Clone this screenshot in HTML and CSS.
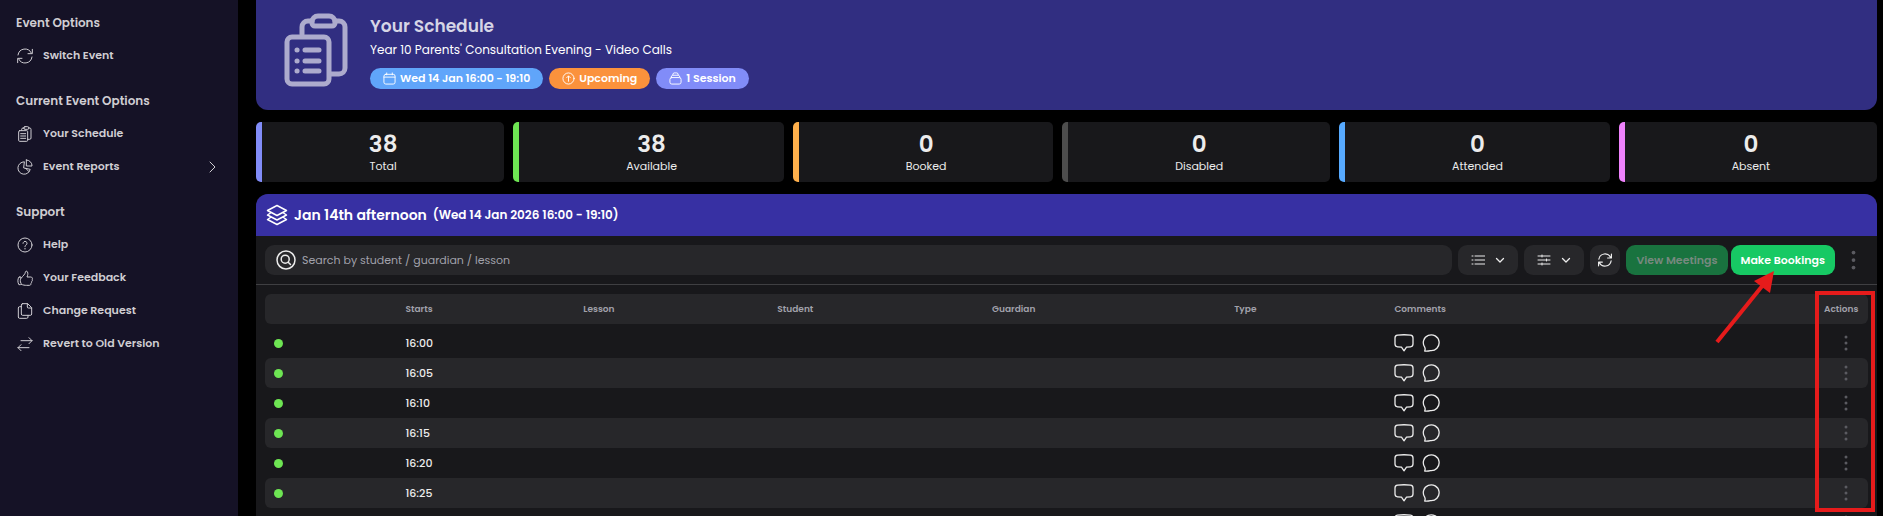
FILE: index.html
```html
<!DOCTYPE html>
<html lang="en">
<head>
<meta charset="UTF-8" />
<meta name="viewport" content="width=device-width, initial-scale=1" />
<title>Your Schedule</title>
<link rel="stylesheet" href="styles.css">
</head>
<body>
  <!-- Shared icons -->
  <svg class="sprite" aria-hidden="true">
    <symbol id="i-refresh" viewBox="0 0 24 24">
      <path d="M1.500 10.500A10.600 10.600 0 0 1 21.500 7.500M22.500 13.500A10.600 10.600 0 0 1 2.500 16.500M23 2v6.500h-6.500M1 22v-6.500h6.500" />
    </symbol>
    <symbol id="i-clipboard" viewBox="0 0 24 24">
      <path d="M7 6.500V5a2 2 0 0 1 2-2h2M17 3h2a2 2 0 0 1 2 2v13a2 2 0 0 1-2 2h-3M12 1h4a1.800 1.800 0 0 1 0 4h-4a1.800 1.800 0 0 1 0-4zM4 7h10.500a1.500 1.500 0 0 1 1.500 1.500v13a1.500 1.500 0 0 1-1.500 1.500H4a1.500 1.500 0 0 1-1.500-1.500v-13A1.500 1.500 0 0 1 4 7zM5.500 11.500h7.500M5.500 15h7.500M5.500 18.500h7.500" />
    </symbol>
    <symbol id="i-pie" viewBox="0 0 24 24">
      <path d="M10.500 4.200A9.300 9.300 0 1 0 19.800 15.500L10.500 13.500zM14 1.500v9h8.500a8.500 8.500 0 0 0-8.500-9zM13 14l5 5" />
    </symbol>
    <symbol id="i-help" viewBox="0 0 24 24">
      <circle cx="12" cy="12" r="10.500" />
      <path d="M9 9.500a3 3 0 1 1 4.500 2.600c-1 .6-1.500 1.200-1.500 2.400M12 17v1" />
    </symbol>
    <symbol id="i-thumb" viewBox="0 0 24 24">
      <path d="M6.500 21.500c3 1.200 5 1.500 8 1.500h4c1.500 0 2.500-1 2.500-2.200 0-.6-.2-1-.2-1 1-.5 1.500-1.400 1.300-2.600 1-.9 1.200-1.800.8-3 .8-1.700-.2-3.700-2.200-3.700H15c1-2.500 1.800-5 .8-7.500-.8-2-3-1.500-3.200.2C12.200 6.500 9 8.500 6.500 12M4.500 10.500H3C.8 14 .8 18 2.800 22H5c1-.3 1.500-1 1-2-1.500-3-1.200-5.500 0-8 .3-.9-.5-1.500-1.500-1.500z" />
    </symbol>
    <symbol id="i-docs" viewBox="0 0 24 24">
      <path d="M8.500 1h7.500l6 6v9.500a2 2 0 0 1-2 2H8.500a2 2 0 0 1-2-2V3a2 2 0 0 1 2-2zM15.500 1v5a1.500 1.500 0 0 0 1.500 1.500h5M6.500 5.500H4a2 2 0 0 0-2 2V21a2 2 0 0 0 2 2h10.500a2 2 0 0 0 2-2v-2.500" />
    </symbol>
    <symbol id="i-swap" viewBox="0 0 24 24">
      <path d="M6 7h16.500M18 2.500L22.500 7 18 11.500M18 17.500H1.500M6 13l-4.500 4.500L6 22" />
    </symbol>
    <symbol id="i-down" viewBox="0 0 12 12">
      <path d="M2.500 4.500L6 8l3.500-3.500" />
    </symbol>
    <symbol id="i-note" viewBox="0 0 20 18">
      <path d="M3.500 1.200Q10 .3 16.500 1.200Q19 1.500 19 4v6q0 2.500-2.500 2.800L12.500 13.200 10 16.800 7.500 13.200 3.500 12.800Q1 12.500 1 10V4q0-2.500 2.500-2.800z" />
    </symbol>
    <symbol id="i-chat" viewBox="0 0 18 18">
      <path d="M2.700 17q.9-2 0-3.800A7.900 7.900 0 1 1 8.500 16.600Q5.500 17.300 2.700 17z" />
    </symbol>
    <symbol id="i-more" viewBox="0 0 4 16">
      <circle cx="2" cy="2" r="1.500" /><circle cx="2" cy="8" r="1.500" /><circle cx="2" cy="14" r="1.500" />
    </symbol>
  </svg>

  <div class="app">
    <nav class="sidebar" aria-label="Main menu">
      <section class="menu-group">
        <h2>Event Options</h2>
        <a href="#switch"><svg class="icon"><use href="#i-refresh" /></svg>Switch Event</a>
      </section>
      <section class="menu-group">
        <h2>Current Event Options</h2>
        <a href="#schedule"><svg class="icon"><use href="#i-clipboard" /></svg>Your Schedule</a>
        <a href="#reports"><svg class="icon"><use href="#i-pie" /></svg>Event Reports
          <svg class="icon chevron" viewBox="0 0 12 12"><path d="M4 1l5 5-5 5" /></svg>
        </a>
      </section>
      <section class="menu-group">
        <h2>Support</h2>
        <a href="#help"><svg class="icon"><use href="#i-help" /></svg>Help</a>
        <a href="#feedback"><svg class="icon"><use href="#i-thumb" /></svg>Your Feedback</a>
        <a href="#change"><svg class="icon"><use href="#i-docs" /></svg>Change Request</a>
        <a href="#revert"><svg class="icon"><use href="#i-swap" /></svg>Revert to Old Version</a>
      </section>
    </nav>

    <main class="content">
      <header class="hero">
        <svg class="hero-icon" viewBox="0 0 64 74">
          <path d="M18 21V14a6 6 0 0 1 6-6h4M51 8h4a6 6 0 0 1 6 6v41a6 6 0 0 1-6 6h-8" />
          <path d="M34 3h11a6 6 0 0 1 6 6v1a3 3 0 0 1-3 3H31a3 3 0 0 1-3-3V9a6 6 0 0 1 6-6z" />
          <rect x="3" y="24" width="42" height="47" rx="5" />
          <path d="M21 37h14M21 48h14M21 58h14M13 37h.1M13 48h.1M13 58h.1" />
        </svg>
        <div class="hero-text">
          <h1>Your Schedule</h1>
          <p>Year 10 Parents' Consultation Evening - Video Calls</p>
          <div class="badges">
            <span class="badge blue">
              <svg class="icon" viewBox="0 0 14 14"><path d="M3 2.500h8a2 2 0 0 1 2 2v6.500a2 2 0 0 1-2 2H3a2 2 0 0 1-2-2V4.500a2 2 0 0 1 2-2zM1 5.500h12M4 1v2M10 1v2" /></svg>
              Wed 14 Jan 16:00 - 19:10
            </span>
            <span class="badge orange">
              <svg class="icon" viewBox="0 0 14 14"><circle cx="7" cy="7" r="6" /><path d="M7 10V4.500M5 6.200l2-2 2 2" /></svg>
              Upcoming
            </span>
            <span class="badge indigo">
              <svg class="icon" viewBox="0 0 14 14"><path d="M3 6h8a2 2 0 0 1 2 2v3a2 2 0 0 1-2 2H3a2 2 0 0 1-2-2V8a2 2 0 0 1 2-2zM2.200 5.800Q2.500 3.500 4 3.500h6q1.500 0 1.800 2.300M4 3.200Q4 1 5.500 1h3Q10 1 10 3.200" /></svg>
              1 Session
            </span>
          </div>
        </div>
      </header>

      <section class="stats" aria-label="Totals">
        <div class="stat total"><strong>38</strong><span>Total</span></div>
        <div class="stat available"><strong>38</strong><span>Available</span></div>
        <div class="stat booked"><strong>0</strong><span>Booked</span></div>
        <div class="stat disabled"><strong>0</strong><span>Disabled</span></div>
        <div class="stat attended"><strong>0</strong><span>Attended</span></div>
        <div class="stat absent"><strong>0</strong><span>Absent</span></div>
      </section>

      <section class="panel">
        <header class="panel-head">
          <svg class="icon layers" viewBox="0 0 22 22"><path d="M11 1.500l9.500 5L11 11.500l-9.500-5zM4.500 9L1.500 11l9.500 5 9.500-5-3-2M4.500 13.500l-3 2L11 20.500l9.500-5-3-2" /></svg>
          <h2>Jan 14th afternoon</h2>
          <span class="when">(Wed 14 Jan 2026 16:00 - 19:10)</span>
        </header>

        <div class="toolbar">
          <label class="search">
            <svg class="icon" viewBox="0 0 20 20"><circle cx="10" cy="10" r="9" /><circle cx="9.200" cy="9.200" r="4" /><path d="M12.200 12.200l2.300 2.300" /></svg>
            <input type="search" aria-label="Search" placeholder="Search by student / guardian / lesson" />
          </label>
          <button type="button" class="tool" aria-label="List view">
            <svg class="icon" viewBox="0 0 14 14"><path d="M4 3h10M4 7h10M4 11h10M1 3h1M1 7h1M1 11h1" /></svg>
            <svg class="icon caret"><use href="#i-down" /></svg>
          </button>
          <button type="button" class="tool" aria-label="Filters">
            <svg class="icon" viewBox="0 0 14 14"><path d="M1 3h12M1 7h12M1 11h12M5 2v2M9.500 6v2M5 10v2" /></svg>
            <svg class="icon caret"><use href="#i-down" /></svg>
          </button>
          <button type="button" class="tool square" aria-label="Refresh"><svg class="icon"><use href="#i-refresh" /></svg></button>
          <div class="actions">
            <button type="button" class="btn" disabled>View Meetings</button>
            <button type="button" class="btn">Make Bookings</button>
          </div>
          <button type="button" class="more large" aria-label="More options"><svg><use href="#i-more" /></svg></button>
        </div>

        <div class="table-wrap">
          <table>
            <thead>
              <tr>
                <th class="col-state"></th>
                <th class="col-starts">Starts</th>
                <th class="col-lesson">Lesson</th>
                <th class="col-student">Student</th>
                <th class="col-guardian">Guardian</th>
                <th class="col-type">Type</th>
                <th class="col-comments">Comments</th>
                <th class="col-actions">Actions</th>
              </tr>
            </thead>
            <tbody id="slots"></tbody>
          </table>
        </div>

        <div class="mark-box"></div>
        <svg class="mark-arrow" viewBox="0 0 62 76"><path class="shaft" d="M2 73L48 16" /><path class="tip" d="M59 2L39 12 55 24z" /></svg>
      </section>
    </main>
  </div>

<script>
  const times = ['16:00', '16:05', '16:10', '16:15', '16:20', '16:25', '16:30'];

  document.getElementById('slots').innerHTML = times.map(time => `
    <tr>
      <td><span class="dot"></span></td>
      <td>${time}</td>
      <td></td>
      <td></td>
      <td></td>
      <td></td>
      <td>
        <div class="comments">
          <button type="button" aria-label="Note for ${time}"><svg class="icon note"><use href="#i-note" /></svg></button>
          <button type="button" aria-label="Comment for ${time}"><svg class="icon chat"><use href="#i-chat" /></svg></button>
        </div>
      </td>
      <td><button type="button" class="more" aria-label="Actions for ${time}"><svg><use href="#i-more" /></svg></button></td>
    </tr>`).join('');
</script>
</body>
</html>
```
FILE: styles.css
```css
* {
  box-sizing: border-box;
}
body {
  margin: 0;
  font-family: Poppins, Inter, sans-serif;
  font-size: 11px;
  background: #000;
  color: #ececec;
}
h1, h2, p {
  margin: 0;
}
button {
  font-family: inherit;
  padding: 0;
  border: none;
  background: none;
  color: inherit;
  cursor: pointer;
}
.sprite {
  display: none;
}
.icon {
  display: block;
  flex: none;
  width: 16px;
  height: 16px;
  fill: none;
  stroke: currentColor;
  stroke-width: 1.5;
  stroke-linecap: round;
  stroke-linejoin: round;
}
.app {
  display: flex;
  height: 100vh;
  overflow: hidden;
}

/* Sidebar */
.sidebar {
  flex: none;
  width: 238px;
  padding: 7px 16px;
  background: #151226;
  color: #cfcdd2;
}
.menu-group {
  margin-bottom: 13px;
}
.menu-group h2 {
  font-size: 12px;
  font-weight: 600;
  line-height: 32px;
}
.menu-group a {
  display: flex;
  align-items: center;
  gap: 10px;
  height: 33px;
  padding-left: 1px;
  color: inherit;
  font-weight: 600;
  text-decoration: none;
}
.menu-group .chevron {
  width: 12px;
  height: 12px;
  margin-left: auto;
  margin-right: 4px;
  stroke-width: 1;
}

/* Main column */
.content {
  flex: 1;
  min-width: 0;
  padding: 0 6px 0 18px;
}
.hero {
  display: flex;
  align-items: flex-start;
  gap: 22px;
  padding: 13px 28px 21px;
  border-radius: 0 0 12px 12px;
  background: #312e81;
}
.hero-icon {
  width: 64px;
  height: 74px;
  fill: none;
  stroke: #adabcd;
  stroke-width: 5;
  stroke-linecap: round;
  stroke-linejoin: round;
}
.hero h1 {
  font-size: 17px;
  font-weight: 600;
  line-height: 26px;
  color: #d6d5e6;
}
.hero p {
  font-size: 12px;
  line-height: 22px;
  color: #fff;
}
.badges {
  display: flex;
  gap: 6px;
  margin-top: 7px;
}
.badge {
  display: flex;
  align-items: center;
  gap: 4px;
  height: 21px;
  padding: 0 13px;
  border-radius: 11px;
  color: #fff;
  font-weight: 600;
}
.badge .icon {
  width: 13px;
  height: 13px;
  stroke-width: 1;
}
.badge.blue {
  background: #60a5fa;
}
.badge.orange {
  background: #fb923c;
}
.badge.indigo {
  background: #818cf8;
}

/* Totals */
.stats {
  display: flex;
  gap: 9px;
  margin: 12px 0;
}
.stat {
  flex: 1 1 auto;
  display: flex;
  flex-direction: column;
  align-items: center;
  height: 60px;
  padding-top: 8px;
  border-left: 6px solid;
  border-radius: 5px;
  background: #18181b;
}
.stat strong {
  font-size: 23px;
  font-weight: 600;
  line-height: 28px;
  color: #ececec;
}
.stat span {
  line-height: 16px;
  color: #ececec;
}
.total {
  border-color: #818cf8;
}
.available {
  border-color: #6ee553;
}
.booked {
  border-color: #ffb04c;
}
.disabled {
  border-color: #4d4d4d;
}
.attended {
  border-color: #57aaff;
}
.absent {
  border-color: #ee82fc;
}

/* Session panel */
.panel {
  position: relative;
  border-radius: 12px 12px 0 0;
  background: #18181b;
}
.panel-head {
  display: flex;
  align-items: center;
  gap: 6px;
  height: 42px;
  padding: 0 10px;
  border-radius: 12px 12px 0 0;
  background: #3730a3;
  color: #fff;
}
.panel-head h2 {
  font-size: 14px;
  font-weight: 600;
}
.panel-head .when {
  font-size: 12px;
  font-weight: 600;
}
.layers {
  width: 22px;
  height: 22px;
}
.toolbar {
  display: flex;
  align-items: center;
  gap: 6px;
  padding: 9px;
  border-bottom: 1px solid #3f3f42;
}
.search {
  flex: 1;
  display: flex;
  align-items: center;
  gap: 6px;
  height: 30px;
  padding: 0 11px;
  border-radius: 9px;
  background: #27272a;
}
.search .icon {
  width: 20px;
  height: 20px;
}
.search input {
  flex: 1;
  padding: 0;
  border: none;
  outline: none;
  background: none;
  color: #ececec;
  font-family: inherit;
  font-size: 11px;
}
.search input::placeholder {
  color: #a1a1aa;
}
.tool {
  display: flex;
  align-items: center;
  justify-content: center;
  gap: 9px;
  width: 60px;
  height: 30px;
  border-radius: 9px;
  background: #27272a;
}
.tool .icon {
  width: 14px;
  height: 14px;
  stroke-width: 1;
}
.tool .caret {
  width: 12px;
  height: 12px;
  stroke-width: 1.3;
}
.tool.square {
  width: 30px;
}
.tool.square .icon {
  stroke-width: 2;
}
.actions {
  display: flex;
  gap: 3px;
}
.btn {
  height: 30px;
  padding: 0 10px;
  border-radius: 9px;
  background: #17c964;
  color: #fff;
  font-size: 11px;
  font-weight: 600;
}
.btn:disabled {
  background: #19733f;
  color: #77897f;
  cursor: default;
}
.more {
  display: block;
  width: 18px;
  margin-left: 13px;
}
.more svg {
  display: block;
  width: 4px;
  height: 16px;
  margin: 0 auto;
  fill: #5b5b61;
}
.more.large {
  width: 24px;
  margin: 0 3px 0 0;
}
.more.large svg {
  width: 5px;
  height: 20px;
}

/* Slots */
.table-wrap {
  padding: 9px;
}
table {
  width: 100%;
  table-layout: fixed;
  border-collapse: collapse;
}
th, td {
  height: 30px;
  padding: 0 9px;
  text-align: left;
}
th {
  background: #27272a;
  color: #a1a1aa;
  font-size: 9px;
  font-weight: 600;
}
td {
  font-weight: 500;
}
th:first-child, td:first-child {
  border-radius: 6px 0 0 6px;
}
th:last-child, td:last-child {
  border-radius: 0 6px 6px 0;
}
tbody::before {
  content: "";
  display: block;
  height: 4px;
}
tbody tr:nth-child(even) td {
  background: #27272a;
}
.col-state {
  width: 8.2%;
}
.col-starts {
  width: 11.1%;
}
.col-lesson {
  width: 12.1%;
}
.col-student {
  width: 13.4%;
}
.col-guardian {
  width: 15.1%;
}
.col-type {
  width: 10%;
}
.col-actions {
  width: 53px;
}
.dot {
  display: block;
  width: 9px;
  height: 9px;
  border-radius: 50%;
  background: #6ee553;
}
.comments {
  display: flex;
  align-items: center;
  gap: 8px;
}
.comments .note {
  width: 20px;
  height: 18px;
}
.comments .chat {
  width: 18px;
  height: 18px;
}
.comments .icon {
  stroke-width: 1.3;
}

/* Callouts over the panel */
.mark-box {
  position: absolute;
  top: 97px;
  right: 2px;
  width: 60px;
  height: 221px;
  border: 4px solid #e61b1b;
}
.mark-arrow {
  position: absolute;
  top: 75px;
  right: 100px;
  width: 62px;
  height: 76px;
}
.mark-arrow .shaft {
  fill: none;
  stroke: #e61b1b;
  stroke-width: 4;
}
.mark-arrow .tip {
  fill: #e61b1b;
}
```
